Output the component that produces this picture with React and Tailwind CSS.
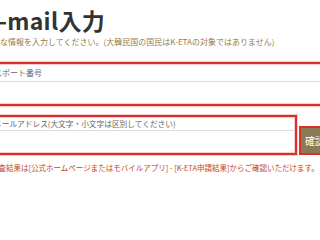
export default function App() {
  return (
    <div
      className="w-[320px] h-[240px] overflow-hidden bg-white"
      style={{ fontFamily: '"Noto Sans CJK JP", "Noto Sans", sans-serif' }}
    >
      <div className="ml-[-16px] pt-[7px]">
        <h1 className="text-[23px] font-bold leading-[26px] tracking-[0.3px] text-[#333] whitespace-nowrap">E-mail入力</h1>
      </div>
      <p className="ml-[-16px] mt-[3px] h-[12px] text-[8px] leading-[12px] text-[#9a7a47] whitespace-nowrap">
        必要な情報を入力してください。(大韓民国の国民はK-ETAの対象ではありません)
      </p>
      <div className="mt-[14px] ml-[-20px] mr-[-20px] border-2 border-[#d8302b] bg-white shadow-[0_0_0_1px_#f8cccc,inset_0_0_0_1px_#f8cccc]">
        <div className="h-[18px] pl-[4px] flex items-center border-b border-[#dddddd] text-[8px] text-[#666] whitespace-nowrap">
          パスポート番号
        </div>
        <div className="h-[22px]"></div>
      </div>
      <div className="flex items-end gap-[2px] mt-[9px] ml-[-20px] mr-[-30px]">
        <div className="w-[317px] shrink-0 border-2 border-[#d8302b] bg-white shadow-[0_0_0_1px_#f8cccc,inset_0_0_0_1px_#f8cccc]">
          <div className="h-[14px] pl-[12px] flex items-center border-b border-[#dddddd] text-[7.7px] text-[#666] whitespace-nowrap">
            メールアドレス(大文字・小文字は区別してください)
          </div>
          <div className="h-[22px]"></div>
        </div>
        <button className="h-[29px] w-[44px] shrink-0 border-2 border-[#d8302b] bg-[#8c7a56] pl-[4px] text-left text-[10px] text-white whitespace-nowrap">
          確認
        </button>
      </div>
      <p className="ml-[-9px] mt-[7px] text-[7.5px] leading-[12px] text-[#c2452a] whitespace-nowrap">
        審査結果は[公式ホームページまたはモバイルアプリ] - [K-ETA申請結果]からご確認いただけます。
      </p>
    </div>
  );
}
